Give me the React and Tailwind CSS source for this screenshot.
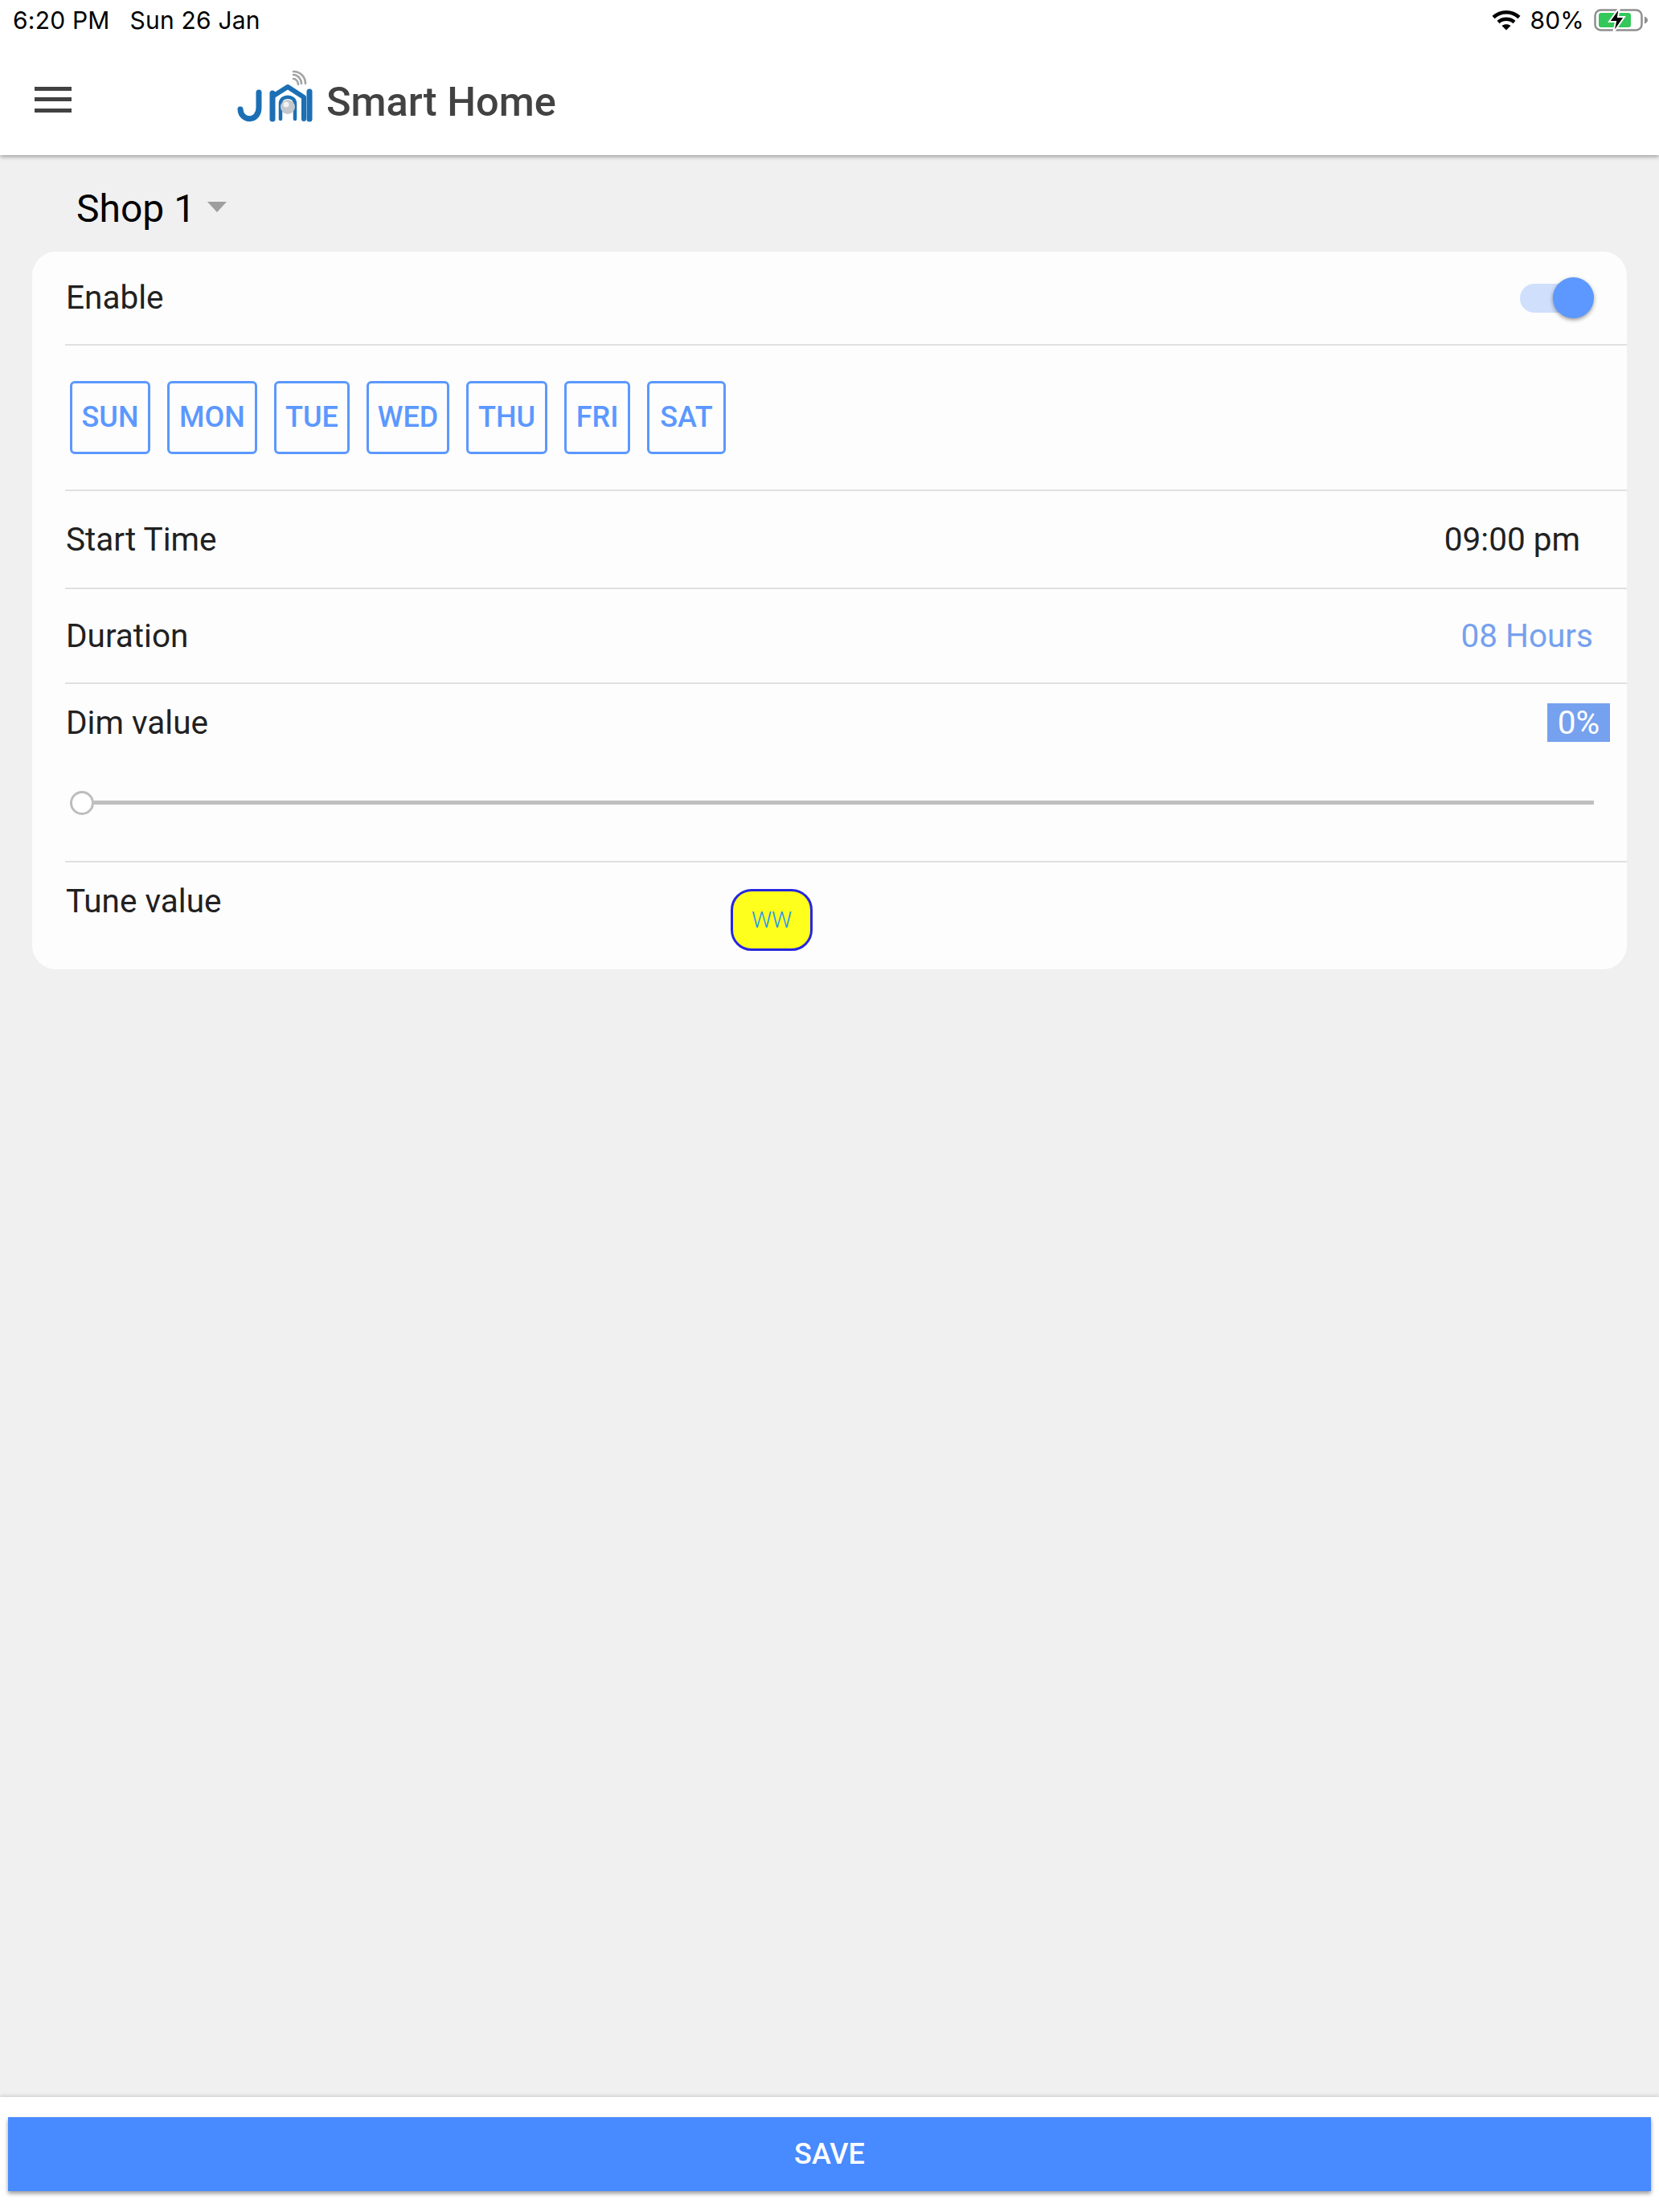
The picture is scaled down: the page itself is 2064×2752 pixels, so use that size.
import React from 'react';

const days = [
  { label: 'SUN', w: 'w-[100px]' },
  { label: 'MON', w: 'w-[112px]' },
  { label: 'TUE', w: 'w-[94px]' },
  { label: 'WED', w: 'w-[103px]' },
  { label: 'THU', w: 'w-[101px]' },
  { label: 'FRI', w: 'w-[82px]' },
  { label: 'SAT', w: 'w-[98px]' },
];

const Wifi = () => (
  <svg width="36" height="26" viewBox="0 0 36 26" fill="none" stroke="#000" strokeWidth="4.5">
    <path d="M2 9.5C11 1 25 1 34 9.5" />
    <path d="M8 15.5C13.5 10.5 22.5 10.5 28 15.5" />
    <path d="M18 25.5L12.5 20C15.5 17.5 20.5 17.5 23.5 20Z" fill="#000" stroke="none" />
  </svg>
);

const Battery = () => (
  <svg width="68" height="32" viewBox="0 0 68 32" fill="none">
    <rect x="1.5" y="3.5" width="58" height="25" rx="7" stroke="#8e8e8e" strokeWidth="2.5" />
    <path d="M63 11.5C65.5 12.5 67 14 67 16C67 18 65.5 19.5 63 20.5Z" fill="#8e8e8e" />
    <rect x="6" y="7" width="40" height="18" rx="3" fill="#34c759" />
    <path d="M32 0L19 18H27L24 32L38 12H30Z" fill="#000" stroke="#fff" strokeWidth="2" />
  </svg>
);

const Logo = () => (
  <svg width="100" height="66" viewBox="290 84 100 66" fill="none" strokeLinecap="round">
    <g stroke="#1c6fb4" strokeWidth="7">
      <path d="M297 133C298 149 320 149 320 131V112" />
      <path d="M337 113V145" />
      <path d="M337 117L356 105L376 118V145" strokeLinejoin="round" strokeWidth="6" />
      <path d="M347 145V126C347 115 365 115 365 126V145" strokeWidth="4.5" />
      <path d="M383 111V145" />
    </g>
    <circle cx="356" cy="130" r="9" fill="#c4c8cc" />
    <circle cx="354" cy="127" r="3.5" fill="#f2f2f2" />
    <g stroke="#a4a4a4" strokeWidth="2.6">
      <path d="M363 95C366 95 369 98 369 102" />
      <path d="M363 90C369 90 373 96 373 101" />
      <path d="M363 86C372 86 378 93 378 101" />
    </g>
  </svg>
);

const App = () => {
  return (
    <div className="flex flex-col h-[2752px] w-[2064px] bg-[#f0f0f0] [font-family:Roboto,sans-serif] overflow-hidden">
      {/* Шапка */}
      <header className="relative z-10 h-[193px] bg-white shadow-[0_2px_5px_rgba(0,0,0,0.35)]">
        <div className="flex items-center h-[50px] pl-[16px] pr-[13px] text-[30px] tracking-[0.2px] text-black [font-family:Inter,sans-serif]">
          <span>6:20 PM</span>
          <span className="ml-[25px]">Sun 26 Jan</span>
          <div className="ml-auto flex items-center">
            <Wifi />
            <span className="ml-[11px] mr-[12px]">80%</span>
            <Battery />
          </div>
        </div>
        <div className="flex items-center pl-[43px] mt-[39px]">
          <svg className="-mt-[6px]" width="46" height="32" viewBox="0 0 46 32" fill="#424242">
            <rect y="0" width="46" height="5" />
            <rect y="13" width="46" height="5" />
            <rect y="27" width="46" height="5" />
          </svg>
          <div className="ml-[203px] -mt-[14px]">
            <Logo />
          </div>
          <span className="ml-[14px] text-[50.5px] font-medium text-[#424242]">Smart Home</span>
        </div>
      </header>

      <main className="flex-1 px-[40px]">
        <div className="flex items-center h-[120px] pt-[14px] pl-[55px] text-[48px] text-black">
          <span>Shop 1</span>
          <span className="ml-[15px] -mt-[6px] w-0 h-0 border-x-[12px] border-x-transparent border-t-[13px] border-t-[#9e9e9e]" />
        </div>

        <div className="rounded-[30px] bg-[#fdfdfd] pl-[41px] text-[40.5px] text-[#212121]">
          <div className="flex items-center justify-between h-[117px] border-b-2 border-[#e0e0e0] pr-[41px]">
            <span className="ml-[1px]">Enable</span>
            <div className="relative w-[92px] h-[51px] flex items-center">
              <div className="w-[84px] h-[36px] rounded-full bg-[#cfdffc]" />
              <div className="absolute right-0 top-0 w-[51px] h-[51px] rounded-full bg-[#5c98ff] shadow-[0_2px_5px_rgba(0,0,0,0.4)]" />
            </div>
          </div>

          <div className="flex gap-[21px] h-[181px] border-b-2 border-[#e0e0e0] pt-[44px] pl-[6px]">
            {days.map((d) => (
              <div
                key={d.label}
                className={`${d.w} h-[91px] flex items-center justify-center pb-[2px] border-[3px] border-[#5c98ff] rounded-[6px] text-[36px] font-medium text-[#5c98ff]`}
              >
                {d.label}
              </div>
            ))}
          </div>

          <div className="flex items-center justify-between h-[122px] border-b-2 border-[#e0e0e0] pr-[58px]">
            <span className="ml-[1px]">Start Time</span>
            <span>09:00 pm</span>
          </div>

          <div className="flex items-center justify-between h-[118px] border-b-2 border-[#e0e0e0] pr-[42px]">
            <span className="ml-[1px]">Duration</span>
            <span className="text-[#76a1ee]">08 Hours</span>
          </div>

          <div className="h-[222px] border-b-2 border-[#e0e0e0] pt-[18px]">
            <div className="flex items-center justify-between pr-[21px]">
              <span className="ml-[1px]">Dim value</span>
              <span className="flex items-center justify-center w-[78px] h-[48px] bg-[#76a1ee] text-white">0%</span>
            </div>
            <div className="flex items-center mt-[54px] pl-[6px] pr-[41px]">
              <div className="w-[30px] h-[30px] rounded-full border-[3px] border-[#bdbdbd] bg-white" />
              <div className="flex-1 h-[5px] bg-[#bfbfbf]" />
            </div>
          </div>

          <div className="flex items-start h-[133px]">
            <span className="w-[827px] mt-[18px] ml-[1px]">Tune value</span>
            <div className="mt-[33px] flex items-center justify-center w-[102px] h-[77px] rounded-[26px] border-[3px] border-[#2626e0] bg-[#ffff1e] text-[28px] font-light text-[#2196f3]">
              WW
            </div>
          </div>
        </div>
      </main>

      <footer className="h-[143px] bg-white px-[10px] pt-[25px] shadow-[0_-2px_4px_rgba(0,0,0,0.12)]">
        <button className="w-full h-[92px] bg-[#488aff] text-white text-[36px] font-medium shadow-[0_3px_5px_rgba(0,0,0,0.4)]">
          SAVE
        </button>
      </footer>
    </div>
  );
};

export default App;
